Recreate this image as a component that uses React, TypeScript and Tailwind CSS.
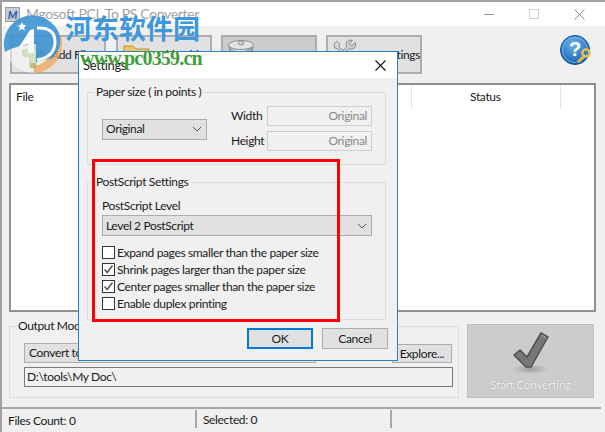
import React from "react";

const font = { fontFamily: 'Lato, Roboto, "Liberation Sans", sans-serif' };

function Chevron() {
  return (
    <svg width="10" height="6" viewBox="0 0 10 6" className="shrink-0">
      <path d="M1 1 L5 5 L9 1" fill="none" stroke="#555" strokeWidth="1" />
    </svg>
  );
}

function Check({ checked, label }: { checked?: boolean; label: string }) {
  return (
    <div className="flex items-center gap-[2px] h-[17px]">
      <div className="w-[13px] h-[13px] border border-[#333] bg-white flex items-center justify-center shrink-0">
        {checked && (
          <svg width="11" height="11" viewBox="0 0 11 11">
            <path d="M1.5 5.5 L4.2 8.5 L9.5 1.5" fill="none" stroke="#555" strokeWidth="1.5" />
          </svg>
        )}
      </div>
      <span className="whitespace-nowrap">{label}</span>
    </div>
  );
}

function ToolButton({ children, label, disabled, cls }: { children: React.ReactNode; label: string; disabled?: boolean; cls: string }) {
  return (
    <div className={`h-[39px] border-2 border-[#adadad] flex shrink-0 ${disabled ? "bg-[#cccccc]" : "bg-[#e1e1e1]"} ${cls}`}>
      {children}
      <span className="whitespace-nowrap self-center">{label}</span>
    </div>
  );
}

function Watermark() {
  return (
    <div className="absolute left-0 top-[8px] w-[210px] h-[72px] pointer-events-none">
      <svg width="80" height="72" viewBox="0 8 80 72" className="absolute left-0 top-0 opacity-90">
        <g transform="translate(0 2)">
          <circle cx="33" cy="43" r="28" fill="#ffffff" fillOpacity="0.55" />
          <path d="M61 34 A29 29 0 0 1 34 71 L33 64 Q52 62 55 38 Z" fill="#eea04a" fillOpacity="0.8" />
          <path d="M5 50 A28 28 0 0 1 60 34 Q62 48 52 56 L36 60 L36 42 L20 44 Q12 46 5 50Z" fill="#3f93d3" />
          <path d="M19 45 L30 28 L34 27 L34 51 L28 51 L28 42 Z" fill="#ffffff" />
          <path d="M37 26 Q55 25 55 40 Q55 55 37 58" fill="none" stroke="#ffffff" strokeWidth="3" />
          <path d="M22 20 L23.5 23 L26.5 23.5 L24 25.5 L25 28.5 L22 27 L19 28.5 L20 25.5 L17.5 23.5 L20.5 23 Z" fill="#ffffff" />
        </g>
      </svg>
      <div
        className="absolute left-[65px] top-[3px] text-[27px] leading-[34px] font-bold text-[#3f98dc] whitespace-nowrap tracking-normal"
        style={{ fontFamily: '"Noto Sans CJK SC", sans-serif' }}
      >
        河东软件园
      </div>
      <div
        className="absolute left-[80px] top-[40px] text-[20px] leading-[20px] font-bold text-[#3f9e3a] whitespace-nowrap tracking-[-0.8px]"
        style={{ fontFamily: '"Liberation Serif", serif' }}
      >
        www.pc0359.cn
      </div>
    </div>
  );
}

export default function App() {
  return (
    <div className="relative w-[605px] h-[432px] overflow-hidden bg-[#f0f0f0] text-[12px] leading-[16px] tracking-[-0.35px] text-[#1a1a1a]" style={font}>
      <div className="w-full h-full flex flex-col border-t-2 border-l-2 border-[#a0a0a0]">
        {/* Title bar */}
        <div className="h-[24px] bg-white flex items-center shrink-0 pl-[3px]">
          <div className="w-[15px] h-[15px] bg-[#c8ccd2] border border-[#9aa0a8] flex items-center justify-center text-[11px] leading-none font-bold italic text-[#1d5fa8]">M</div>
          <span className="ml-[6px] text-[14px] text-[#a3a3a3] whitespace-nowrap">Mgosoft PCL To PS Converter</span>
          <div className="ml-auto flex items-center">
            <div className="w-[10px] h-[1px] bg-[#9a9a9a] mr-[35px]" />
            <div className="w-[10px] h-[10px] border border-[#d0d0d0] mr-[35px]" />
            <svg width="11" height="11" viewBox="0 0 11 11" className="mr-[20px]">
              <path d="M0.5 0.5 L10.5 10.5 M10.5 0.5 L0.5 10.5" stroke="#8a8a8a" strokeWidth="1" />
            </svg>
          </div>
        </div>

        {/* Toolbar */}
        <div className="h-[57px] shrink-0 flex items-start pt-[9px] pl-[8px] relative">
          <ToolButton label="Add Files" cls="w-[96px] pl-[10px] gap-[7px] items-center">
            <svg width="22" height="28" viewBox="0 0 22 28">
              <path d="M8 2 H14 V9 H21 V15 H14 V26 H8 V15 H1 V9 H8 Z" fill="#a9c98e" stroke="#7f9f5f" />
              <rect x="8" y="22" width="6" height="5" fill="#6f8a2c" />
            </svg>
          </ToolButton>
          <ToolButton label="Add Folder" cls="w-[96px] ml-[10px] pl-[4px] gap-[2px] items-center">
            <svg width="30" height="26" viewBox="0 0 30 26">
              <path d="M2 4 H11 L14 7 H27 V22 H2 Z" fill="#efc75e" stroke="#b8923a" />
            </svg>
          </ToolButton>
          <ToolButton label="" disabled cls="w-[96px] ml-[9px] pl-[4px] items-start pt-[1px]">
            <svg width="28" height="30" viewBox="0 0 28 30">
              <defs>
                <linearGradient id="tg" x1="0" x2="1" y1="0" y2="0">
                  <stop offset="0%" stopColor="#9c9c9c" />
                  <stop offset="45%" stopColor="#f4f4f4" />
                  <stop offset="100%" stopColor="#8e8e8e" />
                </linearGradient>
              </defs>
              <path d="M2 8 L5 28 H23 L26 8" fill="url(#tg)" stroke="#8e8e8e" />
              <ellipse cx="14" cy="7" rx="12.5" ry="4.5" fill="#e4e4e4" stroke="#8e8e8e" />
              <ellipse cx="14" cy="5" rx="3" ry="2" fill="#cfcfcf" stroke="#999" />
            </svg>
          </ToolButton>
          <ToolButton label="Settings" cls="w-[96px] ml-[9px] pl-[4px] gap-[23px] items-start pt-[1px]">
            <svg width="26" height="24" viewBox="0 0 26 24">
              <path d="M2 6 L5 3 L8 6 L7 9 L20 20 L18 22 L6 11 L3 10 Z" fill="#d6d6d6" stroke="#8a8a8a" />
              <path d="M24 4 L20 8 L18 6 L21 2 Q17 1 15 4 Q14 7 15 9 L5 18 L7 21 L17 11 Q21 12 23 10 Q25 7 24 4Z" fill="#cfcfcf" stroke="#8a8a8a" />
            </svg>
          </ToolButton>
          <svg width="34" height="32" viewBox="0 0 34 32" className="absolute left-[556px] top-[7px]">
            <defs>
              <radialGradient id="hg" cx="45%" cy="30%" r="75%">
                <stop offset="0%" stopColor="#6cb4ee" />
                <stop offset="100%" stopColor="#0f5aa8" />
              </radialGradient>
            </defs>
            <circle cx="17" cy="17" r="14.5" fill="url(#hg)" stroke="#0d4f96" />
            <circle cx="17" cy="17" r="12.5" fill="none" stroke="#9fcdf2" strokeOpacity="0.6" />
            <text x="17" y="23" textAnchor="middle" fontSize="20" fontWeight="bold" fill="#fff" fontFamily="Liberation Sans">?</text>
            <path d="M27 22 L20 29" stroke="#eeb54c" strokeWidth="2.5" />
            <circle cx="28" cy="20" r="3.6" fill="none" stroke="#f0bd55" strokeWidth="2.4" />
          </svg>
        </div>

        {/* File list */}
        <div className="h-[229px] ml-[7px] mr-[9px] shrink-0 bg-white border-2 border-[#909090] flex items-start">
          <div className="h-[24px] flex items-center w-[400px] pl-[5px]">File</div>
          <div className="h-[24px] w-[150px] border-l border-r border-[#e5e5e5] flex items-center pl-[58px]">Status</div>
        </div>

        {/* Bottom */}
        <div className="flex ml-[7px] mt-[6px] h-[80px] shrink-0">
          <fieldset className="w-[450px] border border-[#dcdcdc] pl-[14px] pr-[5px] m-0 relative">
            <legend className="ml-[-8px] px-[2px] leading-[16px]">Output Mode</legend>
            <div className="flex items-center justify-between mt-[9px]">
              <div className="w-[292px] h-[20px] border border-[#adadad] bg-[#e1e1e1] pl-[4px] leading-[18px]">Convert to</div>
              <div className="w-[60px] h-[19px] border border-[#adadad] bg-[#e1e1e1] text-center leading-[17px] mr-[1px]">Explore...</div>
            </div>
            <div className="h-[20px] border border-[#7a7a7a] bg-[#f0f0f0] mt-[4px] pl-[2px] leading-[18px]">D:\tools\My Doc\</div>
          </fieldset>
          <div className="ml-[8px] mt-[6px] w-[127px] h-[74px] bg-[#cccccc] border border-[#c0c0c0] flex flex-col items-center pt-[5px]">
            <svg width="40" height="44" viewBox="0 0 40 44">
              <defs>
                <radialGradient id="sg">
                  <stop offset="0%" stopColor="#9d9d9d" />
                  <stop offset="100%" stopColor="#cccccc" />
                </radialGradient>
              </defs>
              <ellipse cx="19" cy="39" rx="18" ry="5" fill="url(#sg)" />
              <path d="M3 25 L9 20 L16 27 L30 3 L37 7 L20 37 L15 37 Z" fill="#777" stroke="#505050" strokeWidth="1.5" strokeLinejoin="round" />
              <path d="M31 5 L35 8" stroke="#9a9a9a" strokeWidth="1.5" />
            </svg>
            <span className="text-[#f4f4f4] whitespace-nowrap mt-[3px]" style={{ textShadow: "0 0 1px #888" }}>Start Converting</span>
          </div>
        </div>

        {/* Status bar */}
        <div className="mt-[9px] mr-[4px] h-[22px] border-t-2 border-[#a8a8a8] flex items-center shrink-0">
          <div className="w-[195px] h-[18px] pl-[6px] leading-[22px] border-r-2 border-[#a8a8a8]">Files Count: 0</div>
          <div className="w-[195px] h-[18px] pl-[6px] leading-[20px] border-r-2 border-[#a8a8a8]">Selected: 0</div>
        </div>
      </div>

      {/* Settings dialog */}
      <div className="absolute left-[78px] top-[51px] w-[320px] h-[310px] border border-[#2a80c0] bg-[#f0f0f0] flex flex-col">
        <div className="h-[26px] bg-white flex items-center justify-between pl-[4px] pr-[11px] shrink-0">
          <span className="text-[13px]">Settings</span>
          <svg width="11" height="11" viewBox="0 0 11 11">
            <path d="M0.5 0.5 L10.5 10.5 M10.5 0.5 L0.5 10.5" stroke="#111" strokeWidth="1.1" />
          </svg>
        </div>
        <div className="pl-[8px] pr-[11px] pt-[6px]">
          <fieldset className="h-[81px] border border-[#dcdcdc] m-0 pl-[14px] pr-[13px]">
            <legend className="ml-[-8px] px-[2px] leading-[16px]">Paper size ( in points )</legend>
            <div className="flex items-center mt-[6px]">
              <div className="w-[105px] h-[21px] border border-[#adadad] bg-[#e1e1e1] flex items-center justify-between pl-[3px] pr-[4px] mt-[1px]">
                <span>Original</span>
                <Chevron />
              </div>
              <div className="ml-[24px] flex flex-col gap-[5px] flex-1">
                <div className="flex items-center justify-between">
                  <span>Width</span>
                  <div className="w-[105px] h-[20px] border border-[#cfcfcf] text-right pr-[4px] text-[#8a8a8a] leading-[18px]">Original</div>
                </div>
                <div className="flex items-center justify-between">
                  <span>Height</span>
                  <div className="w-[105px] h-[20px] border border-[#cfcfcf] text-right pr-[4px] text-[#8a8a8a] leading-[18px]">Original</div>
                </div>
              </div>
            </div>
          </fieldset>
          <fieldset className="h-[146px] mt-[9px] border border-[#dcdcdc] m-0 pl-[14px] pr-[13px]">
            <legend className="ml-[-8px] px-[2px] leading-[16px]">PostScript Settings</legend>
            <div className="mt-[9px] leading-[14px]">PostScript Level</div>
            <div className="h-[21px] mt-[2px] border border-[#adadad] bg-[#e1e1e1] flex items-center justify-between pl-[3px] pr-[4px]">
              <span>Level 2 PostScript</span>
              <Chevron />
            </div>
            <div className="mt-[8px] flex flex-col">
              <Check label="Expand pages smaller than the paper size" />
              <Check checked label="Shrink pages larger than the paper size" />
              <Check checked label="Center pages smaller than the paper size" />
              <Check label="Enable duplex printing" />
            </div>
          </fieldset>
          <div className="flex justify-end items-start mt-[8px] mr-[-2px] gap-[9px]">
            <div className="w-[66px] h-[21px] border-2 border-[#0078d7] bg-[#e1e1e1] text-center leading-[17px]">OK</div>
            <div className="w-[66px] h-[21px] border border-[#adadad] bg-[#e1e1e1] text-center leading-[19px]">Cancel</div>
          </div>
        </div>
      </div>

      {/* Red annotation */}
      <div className="absolute left-[92px] top-[159px] w-[248px] h-[163px] border-[3px] border-[#ff0000]" />

      <Watermark />
    </div>
  );
}
